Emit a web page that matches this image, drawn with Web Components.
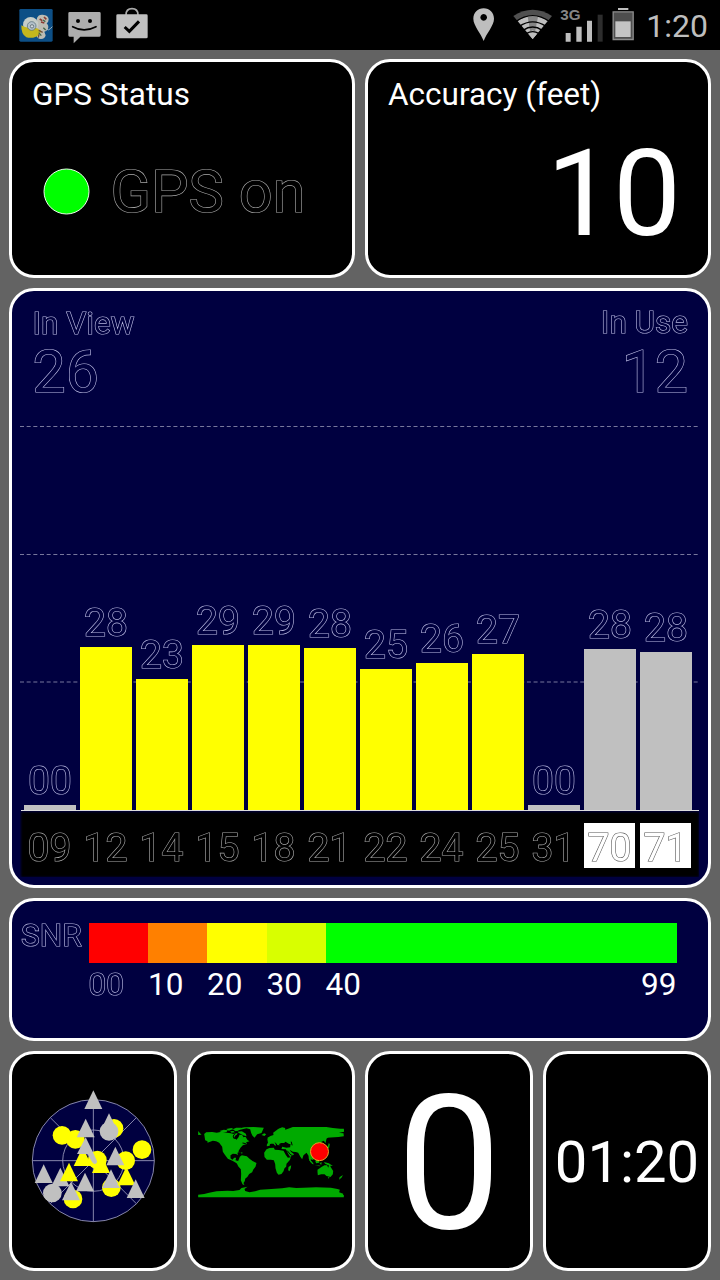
<!DOCTYPE html>
<html lang="en">
<head>
<meta charset="utf-8">
<title>GPS Status</title>
<style>
    body {
        margin: 0;
        width: 720px;
        height: 1280px;
        overflow: hidden;
        background: #636363;
        color: white;
        font-family: Roboto, "Liberation Sans", sans-serif;
    }
</style>
</head>
<body>
<gps-screen></gps-screen>

<script>
// Status bar icons, all drawn three units to the pixel and 150 units high
const ICONS = {
    app: {
        box: '57 0 102 150',
        svg: `
            <rect x="58" y="27" width="100" height="98" rx="4" fill="#0d4f86"/>
            <path d="M111 54q4-11 17-10 17 1 18 14 0 8-6 12 8 8 3 18-4 7-10 7l4 11q-2 11-14 11-13-1-14-13z" fill="#bdbdb4"/>
            <circle cx="92" cy="74" r="23" fill="#c6cdc9"/>
            <path d="M64 76q13 9 25 5l22 4 12 7q-2 12-15 18-14 6-29 2-16-9-15-36z" fill="#c5b71d"/>
            <circle cx="95" cy="78" r="13" fill="#b4c1ca" stroke="#4b6572" stroke-width="2"/>
            <circle cx="96" cy="79" r="5" fill="#d5dcdd" stroke="#42525b" stroke-width="2"/>
            <path d="M119 57l8 5m5-11l7 7m-16 8l10 3" stroke="#8b3c31" stroke-width="5"/>
            <path d="M129 60l7 5m-6 18l7 7m-21 8l8 9" stroke="#446549" stroke-width="4"/>
            <path d="M116 91l12 6m-11 6l-2 10" stroke="#704f37" stroke-width="4"/>
            <path d="M139 88q8 4 12-2l6-6" fill="none" stroke="#9fb4be" stroke-width="3"/>`
    },
    message: {
        box: '202 0 99 150',
        svg: `
            <path d="M207 36h89q4 0 4 4v66q0 4-4 4h-57l-20 20v-20h-12q-4 0-4-4V40q0-4 4-4z" fill="#aeaeae"/>
            <circle cx="232" cy="63" r="6"/>
            <circle cx="268" cy="63" r="6"/>
            <path d="M216 80q34 19 70 0" fill="none" stroke="#000" stroke-width="5" stroke-linecap="round"/>`
    },
    bag: {
        box: '347 0 96 150',
        svg: `
            <path d="M377 45q0-19 18-19t18 19" fill="none" stroke="#aaa" stroke-width="5"/>
            <path d="M352 43h86q4 0 4 4v64q0 4-4 4h-86q-4 0-4-4V47q0-4 4-4z" fill="#c0c0c0"/>
            <path d="M373 81l14 13 29-30" fill="none" stroke="#000" stroke-width="9"/>`
    },
    pin: {
        box: '43 0 66 150',
        svg: `<path fill="#bebebe" fill-rule="evenodd" d="M75 25c18 0 31 13 31 31 0 21-23 44-31 67-8-23-31-46-31-67 0-18 13-31 31-31zm0 17a10 10 0 1 0 .1 0z"/>`
    },
    wifi: {
        box: '160 0 118 150',
        svg: `
            <path d="M161 48Q219 10 277 48L219 117z" fill="#505050"/>
            <path d="M174 63Q219 32 264 63L219 117z" fill="#bebebe"/>
            <path d="M204 50h31l-9 46h-14z" fill="#858585"/>
            <path d="M204 99l15-8 15 8-15 18z" fill="#bebebe"/>
            <path d="M168 65q51-36 102 0M179 79q40-27 80 0M190 91q29-20 58 0M200 101q19-12 38 0" fill="none" stroke="#000" stroke-width="4"/>`
    },
    signal: {
        box: '301 0 130 150',
        svg: `
            <text x="302" y="59" font-family="Liberation Sans, sans-serif" font-weight="bold" font-size="46" textLength="61" lengthAdjust="spacingAndGlyphs" fill="#858585">3G</text>
            <path d="M318 99h15v26h-15zM350 80h16v45h-16zM382 62h15v63h-15z" fill="#bebebe"/>
            <path d="M414 44h15v81h-15z" fill="#2d2d2d"/>`
    },
    battery: {
        box: '457 0 66 150',
        svg: `
            <path d="M475 24h31v6h-31z" fill="#bebebe"/>
            <path d="M460.500 35.500h60v83h-60z" fill="#4e4e4e" stroke="#8c8c8c" stroke-width="4"/>
            <path d="M467 64h46v47h-46z" fill="#c4c4c4"/>`
    }
};

// Satellites of the sky view, painted in this order
const SKY = [
    ['circle', 'use', 186, 166], ['circle', 'use', 226, 178],
    ['circle', 'use', 342, 145], ['circle', 'view', 327, 154], ['circle', 'use', 426, 209],
    ['circle', 'use', 377, 242],
    ['circle', 'use', 334, 323], ['circle', 'use', 219, 357],
    ['triangle', 'view', 280, 60], ['triangle', 'view', 327, 129],
    ['triangle', 'view', 257, 145], ['triangle', 'use', 248, 231],
    ['circle', 'use', 292, 240], ['triangle', 'use', 303, 252],
    ['triangle', 'view', 346, 229],
    ['triangle', 'view', 131, 282], ['triangle', 'view', 181, 292],
    ['circle', 'view', 157, 339], ['triangle', 'use', 207, 277],
    ['triangle', 'view', 255, 307], ['triangle', 'view', 213, 334],
    ['triangle', 'view', 333, 297], ['triangle', 'use', 379, 289],
    ['triangle', 'view', 407, 327]
];

class StatusIcon extends HTMLElement {
    constructor() {
        super();
        this.attachShadow({ mode: 'open' });
    }

    connectedCallback() {
        const icon = ICONS[this.getAttribute('name')];
        const width = icon.box.split(' ')[2] / 3;

        this.shadowRoot.innerHTML = `
            <style>
                :host { display: block; height: 50px; }
                svg { display: block; }
            </style>
            <svg width="${width}" height="50" viewBox="${icon.box}">${icon.svg}</svg>
        `;
    }
}

class StatusBar extends HTMLElement {
    constructor() {
        super();
        this.attachShadow({ mode: 'open' });
        this.shadowRoot.innerHTML = `
            <style>
                :host {
                    display: flex;
                    justify-content: space-between;
                    box-sizing: border-box;
                    height: 50px;
                    padding: 0 12px 0 19px;
                    background: black;
                    color: #bebebe;
                }
                div { display: flex; }
                .left { gap: 15px; }
                .right { gap: 8.500px; }
                .pin { margin-right: 9.500px; }
                span { font-size: 32px; line-height: 52px; margin-left: 3.500px; }
            </style>
            <div class="left">
                <status-icon name="app"></status-icon>
                <status-icon name="message"></status-icon>
                <status-icon name="bag"></status-icon>
            </div>
            <div class="right">
                <status-icon class="pin" name="pin"></status-icon>
                <status-icon name="wifi"></status-icon>
                <status-icon name="signal"></status-icon>
                <status-icon name="battery"></status-icon>
                <span><slot></slot></span>
            </div>
        `;
    }
}

class GpsPanel extends HTMLElement {
    constructor() {
        super();
        this.attachShadow({ mode: 'open' });
        this.shadowRoot.innerHTML = `
            <style>
                :host {
                    display: flex;
                    flex-direction: column;
                    box-sizing: border-box;
                    min-width: 0;
                    border: 3px solid white;
                    border-radius: 25px;
                    background: black;
                }
                :host([blue]) { background: #000040; --inside: #000040; }
                :host([center]) { align-items: center; justify-content: center; }
            </style>
            <slot></slot>
        `;
    }
}

// Text of which only the outline is drawn. The fill goes over the stroke,
// so that the overlapping contours inside a glyph stay hidden.
class OutlineText extends HTMLElement {
    constructor() {
        super();
        this.attachShadow({ mode: 'open' });
        this.shadowRoot.innerHTML = `
            <style>
                :host {
                    display: block;
                    line-height: 1;
                    white-space: nowrap;
                    color: var(--inside, black);
                    -webkit-text-stroke: 1.200px var(--outline, #bcbce4);
                    paint-order: stroke fill;
                    will-change: opacity;
                }
            </style>
            <slot></slot>
        `;
    }
}

class SnrBar extends HTMLElement {
    constructor() {
        super();
        this.attachShadow({ mode: 'open' });
    }

    connectedCallback() {
        const color = this.hasAttribute('used') ? 'yellow' : '#c0c0c0';
        this.shadowRoot.innerHTML = `
            <style>
                :host {
                    display: flex;
                    flex-direction: column;
                    justify-content: flex-end;
                    align-items: center;
                    width: 52px;
                    font-size: 39px;
                }
                .bar {
                    width: 52px;
                    height: ${this.getAttribute('height')}px;
                    margin-top: 4px;
                    background: ${color};
                }
                .id {
                    display: flex;
                    justify-content: center;
                    box-sizing: border-box;
                    align-self: flex-start;
                    width: 51px;
                    height: 45px;
                    margin: 13px 0 9px;
                    padding-top: 6px;
                    --outline: #aaa;
                    --inside: black;
                }
                :host([boxed]) .id { background: white; --outline: #555; --inside: white; }
            </style>
            <outline-text>${this.getAttribute('snr')}</outline-text>
            <div class="bar"></div>
            <div class="id"><outline-text><slot></slot></outline-text></div>
        `;
    }
}

class SnrChart extends HTMLElement {
    constructor() {
        super();
        this.attachShadow({ mode: 'open' });
        this.shadowRoot.innerHTML = `
            <style>
                :host { display: grid; width: 679px; height: 455px; margin: auto 0 8px 8px; }
                svg, .bars { grid-area: 1 / 1; }
                .bars { display: flex; gap: 4px; padding-left: 4px; z-index: 1; }
            </style>
            <svg width="679" height="455">
                <defs><filter id="soft" x="-5%" y="-20%" width="110%" height="140%"><feGaussianBlur stdDeviation="1.200"/></filter></defs>
                <path d="M0 4.500H678M0 132.500H678M0 260H678" stroke="#77779c" stroke-dasharray="4 2.670"/>
                <rect x="1" y="390" width="678" height="65" filter="url(#soft)"/>
                <path d="M1 388.500H679" stroke="#ddd"/>
            </svg>
            <div class="bars"><slot></slot></div>
        `;
    }
}

class SnrScale extends HTMLElement {
    constructor() {
        super();
        this.attachShadow({ mode: 'open' });
        this.shadowRoot.innerHTML = `
            <style>
                :host { display: flex; padding: 22px 0 0 9px; font-size: 31.500px; line-height: 1; }
                .name { width: 67.500px; margin-top: -3px; }
                .scale { display: grid; grid-template-columns: 59.500px 59px 59.500px 59px 351px; }
                .scale i { height: 40px; }
                .scale > :nth-child(n + 6) { padding-top: 6px; }
                .last { display: flex; justify-content: space-between; }
            </style>
            <outline-text class="name">SNR</outline-text>
            <div class="scale">
                <i style="background: #f00"></i>
                <i style="background: #ff8000"></i>
                <i style="background: #ff0"></i>
                <i style="background: #d8ff00"></i>
                <i style="background: #0f0"></i>
                <outline-text>00</outline-text>
                <span>10</span>
                <span>20</span>
                <span>30</span>
                <span class="last"><span>40</span><span>99</span></span>
            </div>
        `;
    }
}

class SkyView extends HTMLElement {
    constructor() {
        super();
        this.attachShadow({ mode: 'open' });

        const satellites = SKY.map(([shape, state, x, y]) => {
            const fill = state === 'use' ? 'yellow' : '#c0c0c0';
            return shape === 'circle'
                ? `<circle cx="${x}" cy="${y}" r="28" fill="${fill}"/>`
                : `<path d="M${x} ${y - 29}l27 56h-54z" fill="${fill}"/>`;
        });
        // the track of the satellite that stands nearly overhead
        satellites.push('<path d="M257 172l22 45 12 27q0 8-7 8-6-1-12-13l-9-17h-32z" fill="#c0c0c0"/>');

        this.shadowRoot.innerHTML = `
            <style>
                :host, svg { display: block; }
            </style>
            <svg width="126.700" height="143.300" viewBox="90 27 380 430">
                <g fill="none" stroke="#a0a0c0" stroke-width="2.500">
                    <circle cx="280" cy="242" r="183" fill="#000040"/>
                    <circle cx="280" cy="242" r="92"/>
                    <path d="M97 242h366M280 59v366M151 113L409 371M151 371L409 113"/>
                </g>
                ${satellites.join('')}
            </svg>
        `;
    }
}

class WorldMap extends HTMLElement {
    constructor() {
        super();
        this.attachShadow({ mode: 'open' });
        this.shadowRoot.innerHTML = `
            <style>
                :host, svg { display: block; }
                svg { margin-top: 3px; }
            </style>
            <svg width="146" height="71" viewBox="54 80 437 213">
                <g fill="#0a0">
                    <path d="M54 92l5 6 5 5-10 1zM72 101l6-5 18-1 14 2 14-3 16 3 12 2 8 2 6-3 8 2-9 6-3 6 7 6 6-7 3-8 8 1 4 7 6-2 6 10 6 4-10 3 2 5-12 4-7 7-6 10-3 6 1 7-5-4-10-1-7 5 0 9 6 4 5-6 6 0-2 8 8 2 2 9 6 3-5 1-10-8-9-5-15-7-9-12-6-9-2-15-9-12-9-4-10-2-8 3-8 3 0-4-7-3z"/>
                    <path d="M118 92l13-4 12 2-4 5-14 1zM138 86l16-3 6 3-14 5zM158 87l10-5 15 0-9 9-8 2zM172 94l13-1 12 7 2 8-10-3-14-8zM150 93l10-1 4 4-10 1z"/>
                    <path d="M172 85l20-4 29-1 30 2-3 7-4 9-13 4-8 10-6-6-4-8-3-11-11-3-22 5zM244 104l8-5 6 3-5 5z"/>
                    <path d="M158 149l12 2 9 5-8 0-11-4zM181 156l7 1-3 3z"/>
                    <path d="M179 169l6-4 15 3 8 7 9 7 12 6-3 11-7 9-3 8-9 5-5 8-7 6-1 7-4 6 3 7-6-3-5-12 1-19-1-14-8-9-4-9 4-7z"/>
                    <path d="M252 157l7-10 9-4 13-1 3 6 12 1 14 2 7 13 6 8 9-1-3 8-10 11-1 9-5 5-3 9-6 8-9 2-5-6-4-13-1-13-4-11-9-2-12 0-7-8zM325 200l8-5-1 8-4 10-4-3z"/>
                    <path d="M264 126l-4 7 0 5 8-2 4-6 8 0 6 8 1-8 7 7 4-1-1-5 6-3 9 0 4-4 11 7 4 0-1 10-11 1-13-3-2 7 13 1 8 15 5 8 12-8-9-7-5-7 10 6 9 1 7 2 7 13 5 7 4-12 9-8 6 9 1 10 7 12-1-11 7 2 3-6-3-11 2-5 9-3 7-6 2-9 6-6-1-9 7-3 5 8 3-14 8-7 13-3 4-6 4 0 0 11 5-8 5-5 14-3-1-9-11 0-22-2-15-2-9-2-11-1-19 1-5-5-18-2-11 4-14 3-18 1-16 6-7 2 0-5-9-2-12 5-15 11 1 7-9 3-9 5z"/>
                    <path d="M440 97l30 0 20 2 1 9-16 2-35 2z"/>
                    <path d="M262 117l5-7 6 9 0 6-10 1zM292 87l12-3-3 6zM327 94l8-7 12-2-15 10zM443 137l3-9 3 4-2 10-11 8-2-3z"/>
                    <path d="M388 177l8 7 5 8-5-1-9-11zM405 181l12-7 0 13-9 2zM418 188l7-2-2 8zM431 185l15 4 12 8-10-1-13-6zM404 194l17 2-3 2z"/>
                    <path d="M412 208l13-9 8-4 8 0 3 7 4-10 4 9 7 11-1 10-7 8-12-3-6-5-10 0-10 3-1-10zM443 231l5 0-3 4zM478 231l10-7-3 7-8 7z"/>
                    <path d="M54 283l18-2 15-4 22-4 33-2 17 1 19-3 6-6 18-4-9 7 2 6 13 4 17-3 15-5 34-2 32-2 21-3 21 2 22-1 38-1 44 1 20 4 7 2-2 8 12 4v4h2v7H54z"/>
                </g>
                <path d="M269 132l10 3 6 7M285 127l6 8 8 2M302 131l18 3M333 124l3 11M321 151l11 13 5 1M166 98l-7 9 2 7 8-1 4-13M187 128l10 2" fill="none" stroke="#000" stroke-width="3"/>
                <circle cx="418" cy="154" r="27" fill="red" stroke="#ee9f22" stroke-width="3"/>
            </svg>
        `;
    }
}

class GpsScreen extends HTMLElement {
    constructor() {
        super();
        this.attachShadow({ mode: 'open' });
        this.shadowRoot.innerHTML = `
            <style>
                :host { display: block; }
                main {
                    display: grid;
                    grid-template-columns: repeat(4, 1fr);
                    grid-template-rows: 219px 600px 143px 220px;
                    gap: 10px;
                    padding: 9px 9px 0;
                }
                .half { grid-column: span 2; }
                .full { grid-column: span 4; }
                h2 {
                    margin: 0;
                    padding: 17px 0 0 20px;
                    font-size: 31.500px;
                    line-height: 1;
                    font-weight: normal;
                }
                .status { display: flex; padding: 46px 0 0 30.500px; gap: 21px; font-size: 59.500px; --outline: #aaa; }
                .status svg { display: block; margin-top: 11px; }
                .status outline-text { margin-top: 6px; }
                .accuracy { align-self: flex-end; margin: 23px 28.500px 0 0; font-size: 121px; line-height: 1; letter-spacing: -1.500px; }
                .counts { display: flex; justify-content: space-between; padding: 17px 20px 0 20.500px; font-size: 31.500px; }
                .counts div:last-child { display: flex; flex-direction: column; align-items: flex-end; margin-top: -1px; }
                .counts div:last-child .big { margin-top: 3px; }
                .big { font-size: 59px; margin-top: 2px; }
                .speed { margin-top: 6px; font-size: 187px; line-height: 1; }
                .time { margin-top: 1px; font-size: 58px; line-height: 1; }
            </style>
            <status-bar>1:20</status-bar>
            <main>
                <gps-panel class="half">
                    <h2>GPS Status</h2>
                    <div class="status">
                        <svg width="47" height="47"><circle cx="23.500" cy="23.500" r="22.500" fill="lime" stroke="#e8ffe8"/></svg>
                        <outline-text>GPS on</outline-text>
                    </div>
                </gps-panel>
                <gps-panel class="half">
                    <h2>Accuracy (feet)</h2>
                    <span class="accuracy">10</span>
                </gps-panel>
                <gps-panel class="full" blue>
                    <div class="counts">
                        <div>
                            <outline-text>In View</outline-text>
                            <outline-text class="big">26</outline-text>
                        </div>
                        <div>
                            <outline-text>In Use</outline-text>
                            <outline-text class="big">12</outline-text>
                        </div>
                    </div>
                    <snr-chart>
                        <snr-bar snr="00" height="5">09</snr-bar>
                        <snr-bar snr="28" height="163" used>12</snr-bar>
                        <snr-bar snr="23" height="131" used>14</snr-bar>
                        <snr-bar snr="29" height="165" used>15</snr-bar>
                        <snr-bar snr="29" height="165.500" used>18</snr-bar>
                        <snr-bar snr="28" height="162" used>21</snr-bar>
                        <snr-bar snr="25" height="141" used>22</snr-bar>
                        <snr-bar snr="26" height="147" used>24</snr-bar>
                        <snr-bar snr="27" height="156" used>25</snr-bar>
                        <snr-bar snr="00" height="5">31</snr-bar>
                        <snr-bar snr="28" height="161" boxed>70</snr-bar>
                        <snr-bar snr="28" height="158" boxed>71</snr-bar>
                    </snr-chart>
                </gps-panel>
                <gps-panel class="full" blue>
                    <snr-scale></snr-scale>
                </gps-panel>
                <gps-panel center><sky-view></sky-view></gps-panel>
                <gps-panel center><world-map></world-map></gps-panel>
                <gps-panel center><span class="speed">0</span></gps-panel>
                <gps-panel center><span class="time">01:20</span></gps-panel>
            </main>
        `;
    }
}

customElements.define('status-icon', StatusIcon);
customElements.define('status-bar', StatusBar);
customElements.define('gps-panel', GpsPanel);
customElements.define('outline-text', OutlineText);
customElements.define('snr-bar', SnrBar);
customElements.define('snr-chart', SnrChart);
customElements.define('snr-scale', SnrScale);
customElements.define('sky-view', SkyView);
customElements.define('world-map', WorldMap);
customElements.define('gps-screen', GpsScreen);
</script>
</body>
</html>
